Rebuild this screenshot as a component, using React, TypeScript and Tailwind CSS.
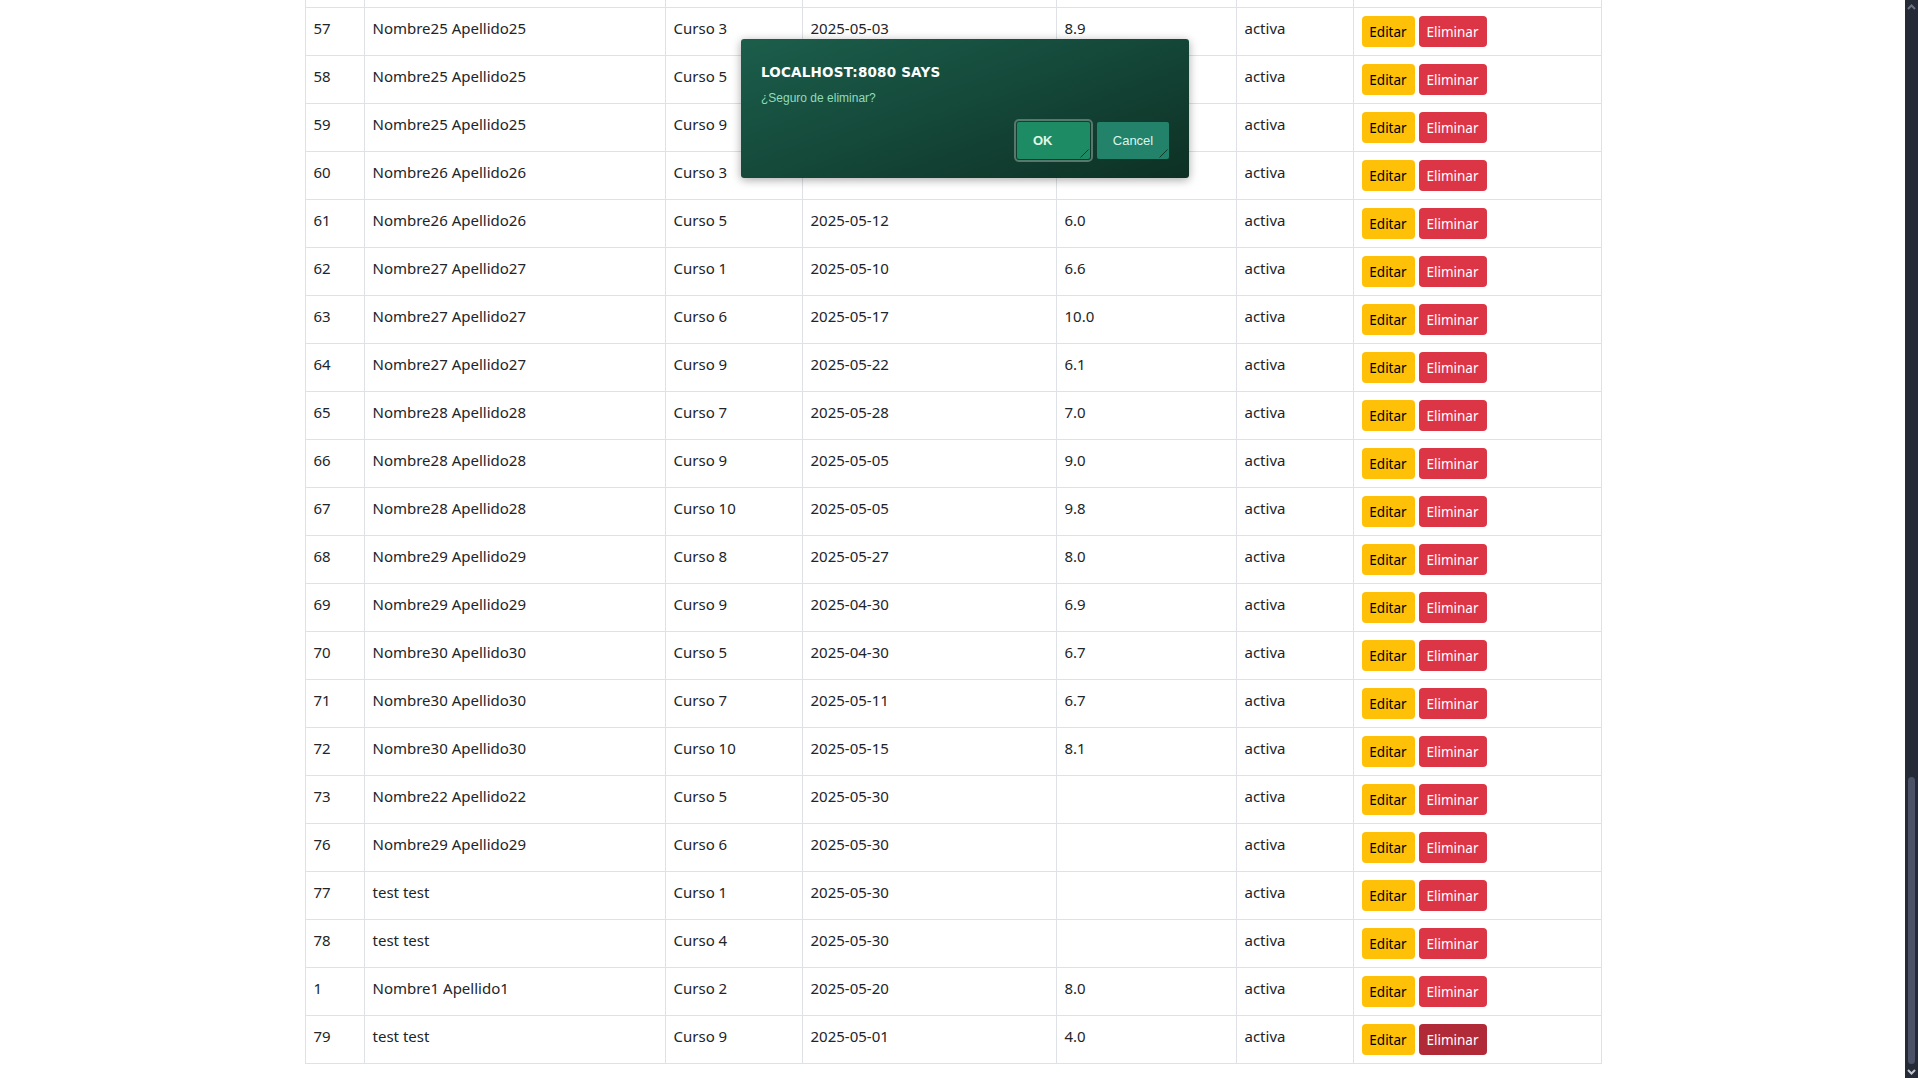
import React from "react";

type Row = { id: string; name: string; curso: string; fecha: string; nota: string };

const rows: Row[] = [
  { id: "", name: "", curso: "", fecha: "", nota: "" },
  { id: "57", name: "Nombre25 Apellido25", curso: "Curso 3", fecha: "2025-05-03", nota: "8.9" },
  { id: "58", name: "Nombre25 Apellido25", curso: "Curso 5", fecha: "", nota: "" },
  { id: "59", name: "Nombre25 Apellido25", curso: "Curso 9", fecha: "", nota: "" },
  { id: "60", name: "Nombre26 Apellido26", curso: "Curso 3", fecha: "", nota: "" },
  { id: "61", name: "Nombre26 Apellido26", curso: "Curso 5", fecha: "2025-05-12", nota: "6.0" },
  { id: "62", name: "Nombre27 Apellido27", curso: "Curso 1", fecha: "2025-05-10", nota: "6.6" },
  { id: "63", name: "Nombre27 Apellido27", curso: "Curso 6", fecha: "2025-05-17", nota: "10.0" },
  { id: "64", name: "Nombre27 Apellido27", curso: "Curso 9", fecha: "2025-05-22", nota: "6.1" },
  { id: "65", name: "Nombre28 Apellido28", curso: "Curso 7", fecha: "2025-05-28", nota: "7.0" },
  { id: "66", name: "Nombre28 Apellido28", curso: "Curso 9", fecha: "2025-05-05", nota: "9.0" },
  { id: "67", name: "Nombre28 Apellido28", curso: "Curso 10", fecha: "2025-05-05", nota: "9.8" },
  { id: "68", name: "Nombre29 Apellido29", curso: "Curso 8", fecha: "2025-05-27", nota: "8.0" },
  { id: "69", name: "Nombre29 Apellido29", curso: "Curso 9", fecha: "2025-04-30", nota: "6.9" },
  { id: "70", name: "Nombre30 Apellido30", curso: "Curso 5", fecha: "2025-04-30", nota: "6.7" },
  { id: "71", name: "Nombre30 Apellido30", curso: "Curso 7", fecha: "2025-05-11", nota: "6.7" },
  { id: "72", name: "Nombre30 Apellido30", curso: "Curso 10", fecha: "2025-05-15", nota: "8.1" },
  { id: "73", name: "Nombre22 Apellido22", curso: "Curso 5", fecha: "2025-05-30", nota: "" },
  { id: "76", name: "Nombre29 Apellido29", curso: "Curso 6", fecha: "2025-05-30", nota: "" },
  { id: "77", name: "test test", curso: "Curso 1", fecha: "2025-05-30", nota: "" },
  { id: "78", name: "test test", curso: "Curso 4", fecha: "2025-05-30", nota: "" },
  { id: "1", name: "Nombre1 Apellido1", curso: "Curso 2", fecha: "2025-05-20", nota: "8.0" },
  { id: "79", name: "test test", curso: "Curso 9", fecha: "2025-05-01", nota: "4.0" },
];

const td = "border border-[#dee2e6] px-2 py-2 align-top h-[47px]";

function Corner() {
  return (
    <svg className="absolute right-[1px] bottom-[1px]" width="9" height="9" viewBox="0 0 9 9">
      <line x1="0.5" y1="8.5" x2="8.5" y2="0.5" stroke="#0f3a2c" strokeWidth="1" />
    </svg>
  );
}

export default function App() {
  return (
    <div className="flex h-[1078px] w-full overflow-hidden bg-white">
      <div className="relative flex-1 overflow-hidden">
        <div
          className="mx-auto w-[1296px] -mt-[40px] text-[#212529]"
          style={{ fontFamily: '"Noto Sans", "Open Sans", sans-serif' }}
        >
          <table className="w-full table-fixed border-collapse text-[15px] leading-6">
            <colgroup>
              <col className="w-[59px]" />
              <col className="w-[301px]" />
              <col className="w-[137px]" />
              <col className="w-[254px]" />
              <col className="w-[180px]" />
              <col className="w-[117px]" />
              <col className="w-[248px]" />
            </colgroup>
            <tbody>
              {rows.map((r, i) => (
                <tr key={"row-" + i}>
                  <td className={td}>{r.id}</td>
                  <td className={td}>{r.name}</td>
                  <td className={td}>{r.curso}</td>
                  <td className={td}>{r.fecha}</td>
                  <td className={td}>{r.nota}</td>
                  <td className={td}>{i === 0 ? "" : "activa"}</td>
                  <td className={td}>
                    {i > 0 && (
                      <div className="flex gap-[4px]">
                        <button className="flex h-[31px] w-[53px] items-center justify-center rounded-[4px] bg-[#ffc107] text-[13.5px] text-black">
                          Editar
                        </button>
                        <button
                          className={
                            i === rows.length - 1
                              ? "flex h-[31px] w-[68px] items-center justify-center rounded-[4px] bg-[#b02a37] text-[13.5px] text-white"
                              : "flex h-[31px] w-[68px] items-center justify-center rounded-[4px] bg-[#dc3545] text-[13.5px] text-white"
                          }
                        >
                          Eliminar
                        </button>
                      </div>
                    )}
                  </td>
                </tr>
              ))}
            </tbody>
          </table>
        </div>

        {/* Confirm dialog */}
        <div className="absolute left-[741px] top-[39px] h-[139px] w-[448px] rounded-[3px] bg-[linear-gradient(160deg,#1c5e4b_0%,#154a3b_45%,#0d3024_100%)] px-5 pt-[25px] shadow-[0_2px_10px_rgba(0,0,0,0.35)]">
          <div
            className="text-[13.5px] font-bold leading-4 tracking-[0.2px] text-white"
            style={{ fontFamily: '"DejaVu Sans", sans-serif' }}
          >
            LOCALHOST:8080 SAYS
          </div>
          <div
            className="mt-[10px] text-[12px] leading-4 text-[#8fdcbc]"
            style={{ fontFamily: '"Liberation Sans", Arial, sans-serif' }}
          >
            ¿Seguro de eliminar?
          </div>
          <div
            className="mt-[16px] flex justify-end gap-[7px]"
            style={{ fontFamily: '"Liberation Sans", Arial, sans-serif' }}
          >
            <button className="relative h-[37px] w-[73px] rounded-[2px] bg-[#1d8b64] pl-[16px] text-left text-[13px] font-bold text-[#dff7ec] outline-2 outline-offset-[1px] outline-[#56786d]">
              OK
              <Corner />
            </button>
            <button className="relative h-[37px] w-[72px] rounded-[2px] bg-[#22826a] text-[13px] text-[#dcf5ec]">
              Cancel
              <Corner />
            </button>
          </div>
        </div>
      </div>

      {/* Scrollbar */}
      <div className="relative flex h-full w-[13px] flex-col items-center bg-[#252a37]">
        <svg className="mt-[4px]" width="9" height="6" viewBox="0 0 9 6">
          <path d="M1 5 L4.5 1.5 L8 5" stroke="#6c7282" strokeWidth="2" fill="none" />
        </svg>
        <div className="flex-1" />
        <div className="mb-[5px] h-[287px] w-[7px] rounded-full bg-[#4b5166]" />
        <svg className="mb-[3px]" width="9" height="6" viewBox="0 0 9 6">
          <path d="M1 1 L4.5 4.5 L8 1" stroke="#c3c6cd" strokeWidth="2" fill="none" />
        </svg>
      </div>
    </div>
  );
}
